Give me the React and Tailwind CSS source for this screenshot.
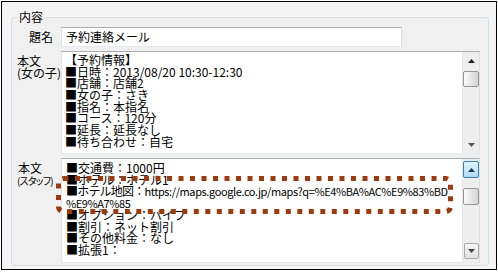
import React from "react";

const font = "font-['Noto_Sans_CJK_JP','Noto_Sans_CJK_SC',sans-serif]";

function Tri({ down = false, color = "#333" }) {
  return (
    <svg width="7" height="4" viewBox="0 0 7 4">
      {down ? (
        <polygon points="0,0 7,0 3.5,4" fill={color} />
      ) : (
        <polygon points="0,4 3.5,0 7,4" fill={color} />
      )}
    </svg>
  );
}

function ScrollbarA() {
  return (
    <div className="w-[17px] h-full flex flex-col bg-[#eeeeee] border-l border-[#e6e6e6]">
      <div className="h-[17px] flex items-center justify-center">
        <Tri color="#222" />
      </div>
      <div className="flex-1">
        <div className="mt-[2px] w-[16px] h-[16px] rounded-[2px] border border-[#959595] bg-gradient-to-r from-[#fafafa] to-[#d4d4d4]" />
      </div>
      <div className="h-[17px] flex items-center justify-center">
        <Tri down color="#555" />
      </div>
    </div>
  );
}

function ScrollbarB() {
  return (
    <div className="w-[17px] h-full flex flex-col bg-[#eeeeee] border-l border-[#e6e6e6] pt-[2px] pb-[3px]">
      <div className="h-[17px] w-[16px] rounded-[2px] border border-[#3c7fb1] bg-gradient-to-b from-[#e3f4fc] to-[#a9dbf6] flex items-center justify-center">
        <Tri color="#1c3b5a" />
      </div>
      <div className="flex-1">
        <div className="mt-[10px] w-[16px] h-[17px] rounded-[2px] border border-[#959595] bg-gradient-to-r from-[#fafafa] to-[#d4d4d4]" />
      </div>
      <div className="h-[16px] w-[15px] ml-[1px] rounded-[2px] border border-[#a8a8a8] bg-gradient-to-b from-[#f6f6f6] to-[#e0e0e0] flex items-center justify-center">
        <Tri down color="#444" />
      </div>
    </div>
  );
}

const lines1 = [
  "【予約情報】",
  "■日時：2013/08/20 10:30-12:30",
  "■店舗：店舗2",
  "■女の子：さき",
  "■指名：本指名",
  "■コース：120分",
  "■延長：延長なし",
  "■待ち合わせ：自宅",
];

export default function App() {
  return (
    <div
      className={`relative w-[498px] h-[272px] bg-white text-[12px] text-black ${font} overflow-hidden`}
    >
      <div className="mt-[1px] ml-[1px] w-[496px] h-[269px] border border-black bg-[#f4f4f4]">
        <div className="relative ml-[9px] mt-[15px] w-[478px] h-[249px] border border-[#d5dfe5] rounded-[3px] bg-[#f0f0f0] pt-[9px] pr-[8px] pb-[2px] flex flex-col gap-[4px]">
          <span className="absolute left-[5px] top-[-8px] px-[2px] leading-[14px] bg-[#f2f2f2]">
            内容
          </span>

          <div className="flex h-[20px]">
            <div className="w-[49px] flex items-center justify-end pr-[8px] leading-[12px]">
              題名
            </div>
            <div className="w-[341px] h-[20px] bg-white border border-[#dbdfe6] border-t-[#abadb3] border-b-[#e3e9ef] flex items-center pl-[4px] leading-[12px]">
              予約連絡メール
            </div>
          </div>

          <div className="flex h-[103px]">
            <div className="w-[49px] pl-[5px] pt-[4px] leading-[12px] whitespace-nowrap">
              <div>本文</div>
              <div>(女の子)</div>
            </div>
            <div className="w-[419px] h-[103px] bg-white border border-[#dbdfe6] border-t-[#abadb3] border-b-[#e3e9ef] border-l-[#e2e3ea] flex">
              <div className="flex-1 overflow-hidden pl-[3px] pt-[2px] pb-[4px] leading-[11.67px]">
                <div className="h-full overflow-hidden">
                  {lines1.map((l, i) => (
                    <div key={i} className="whitespace-nowrap">
                      {l}
                    </div>
                  ))}
                </div>
              </div>
              <ScrollbarA />
            </div>
          </div>

          <div className="flex h-[105px]">
            <div className="w-[49px] pl-[5px] pt-[4px] leading-[12px] whitespace-nowrap">
              <div className="pl-[1px]">本文</div>
              <div className="[font-feature-settings:'palt'] text-[10px] tracking-[-0.8px] mt-[1px]">
                (スタッフ)
              </div>
            </div>
            <div className="w-[419px] h-[105px] bg-white border border-[#dbdfe6] border-t-[#abadb3] border-b-[#e3e9ef] border-l-[#e2e3ea] flex">
              <div className="flex-1 overflow-hidden pl-[4px] pt-[3px] pb-[6px] leading-[11.5px]">
                <div className="h-full overflow-hidden whitespace-nowrap">
                  <div>■交通費：1000円</div>
                  <div>■ホテル：ホテル1</div>
                  <div>
                    <span className="tracking-[-0.8px]">■ホテル地図：</span>
                    <span className="text-[11px] tracking-[-0.4px]">
                      https://maps.google.co.jp/maps?q=%E4%BA%AC%E9%83%BD
                    </span>
                  </div>
                  <div className="text-[11px] tracking-[-0.4px]">%E9%A7%85</div>
                  <div>■オプション：バイブ</div>
                  <div>■割引：ネット割引</div>
                  <div>■その他料金：なし</div>
                  <div>■拡張1：</div>
                </div>
              </div>
              <ScrollbarB />
            </div>
          </div>
        </div>
      </div>

      <svg
        className="absolute left-0 top-0 pointer-events-none"
        width="498"
        height="272"
        viewBox="0 0 498 272"
      >
        <rect
          x="58.5"
          y="178.5"
          width="392"
          height="33"
          rx="5"
          fill="none"
          stroke="#9c3b0f"
          strokeWidth="5"
          strokeDasharray="5 6.5"
        />
      </svg>
    </div>
  );
}
